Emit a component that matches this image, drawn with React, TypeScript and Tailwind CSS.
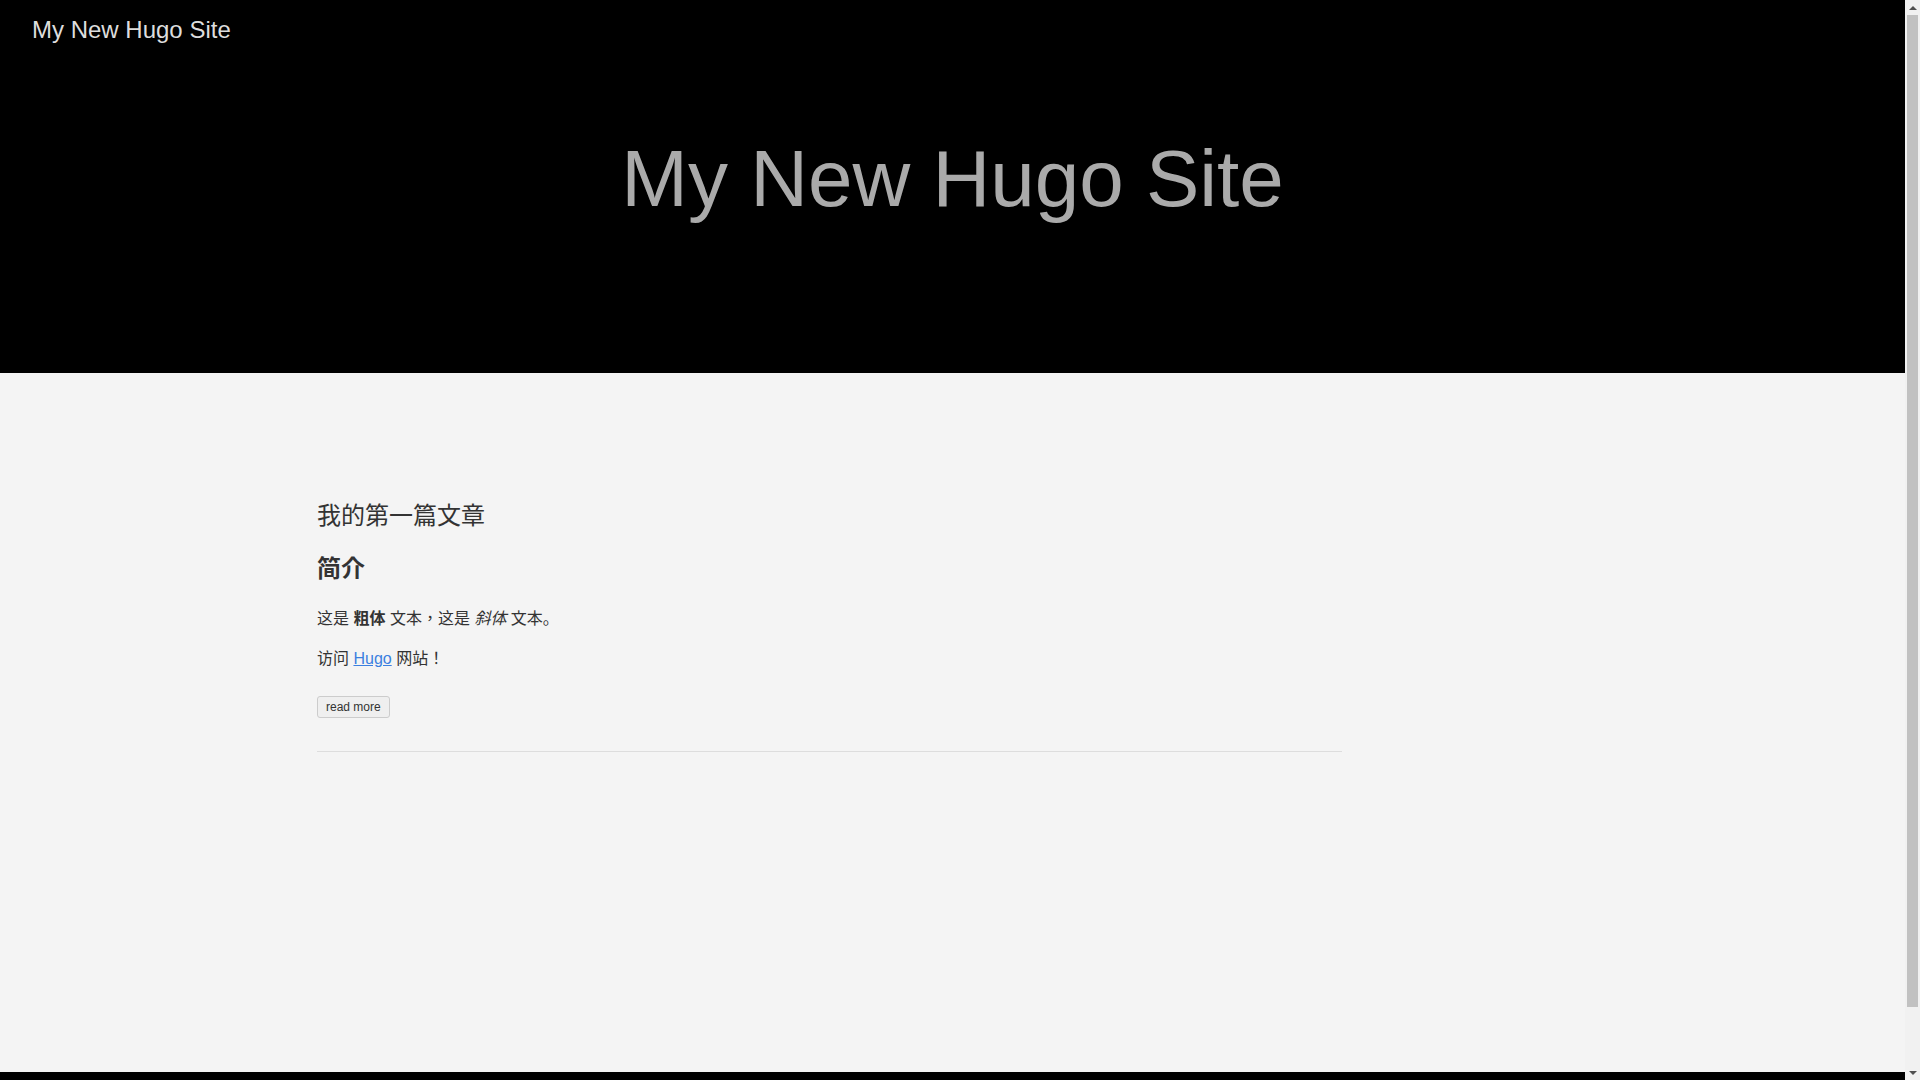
import React from "react";

export default function App() {
  const font = { fontFamily: '"Liberation Sans", "Noto Sans CJK JP", Arial, sans-serif' };
  return (
    <div style={font} className="h-[1080px] overflow-hidden flex bg-[#f4f4f4] text-[#333]">
      <div className="flex-1 flex flex-col min-h-[1143px]">
        <header className="h-[373px] bg-black flex flex-col">
          <nav className="px-8 pt-4">
            <a className="text-[24px] leading-[28px] text-[#dddddd]">My New Hugo Site</a>
          </nav>
          <h1 className="mt-[94px] text-center text-[80px] leading-[80px] text-[#aaaaaa] font-normal">My New Hugo Site</h1>
        </header>
        <main className="flex-1 pt-[127px]">
          <div className="ml-[317px] w-[1025px]">
            <article className="pb-[33px] border-b border-[#dddddd]">
              <h2 className="text-[24px] leading-[32px] font-normal text-[#333]">我的第一篇文章</h2>
              <h2 className="mt-[21px] text-[24px] leading-[32px] font-bold text-[#333]">简介</h2>
              <p className="mt-[22px] text-[16px] leading-[24px]">
                这是 <strong className="font-bold">粗体</strong> 文本<span className="leading-[0px] font-['Noto_Sans_CJK_TC',sans-serif]">，</span>这是 <em className="italic">斜体</em> 文本。
              </p>
              <p className="mt-[16px] text-[16px] leading-[24px]">
                访问 <a className="text-[#3b7fe0] underline">Hugo</a> 网站！
              </p>
              <button className="mt-[25px] h-[22px] px-[8px] text-[12px] leading-[20px] text-[#333] bg-[#efefef] border border-[#cccccc] rounded-[3px]">
                read more
              </button>
            </article>
          </div>
        </main>
        <footer className="h-[71px] bg-black"></footer>
      </div>
      <div className="w-[15px] h-[1080px] bg-[#f1f1f1] flex flex-col items-center">
        <div className="h-[15px] flex items-center justify-center">
          <div className="w-0 h-0 border-l-[4px] border-r-[4px] border-b-[4px] border-l-transparent border-r-transparent border-b-[#505050]"></div>
        </div>
        <div className="w-[11px] h-[992px] bg-[#c1c1c1]"></div>
        <div className="flex-1"></div>
        <div className="h-[15px] flex items-center justify-center">
          <div className="w-0 h-0 border-l-[4px] border-r-[4px] border-t-[4px] border-l-transparent border-r-transparent border-t-[#505050]"></div>
        </div>
      </div>
    </div>
  );
}
